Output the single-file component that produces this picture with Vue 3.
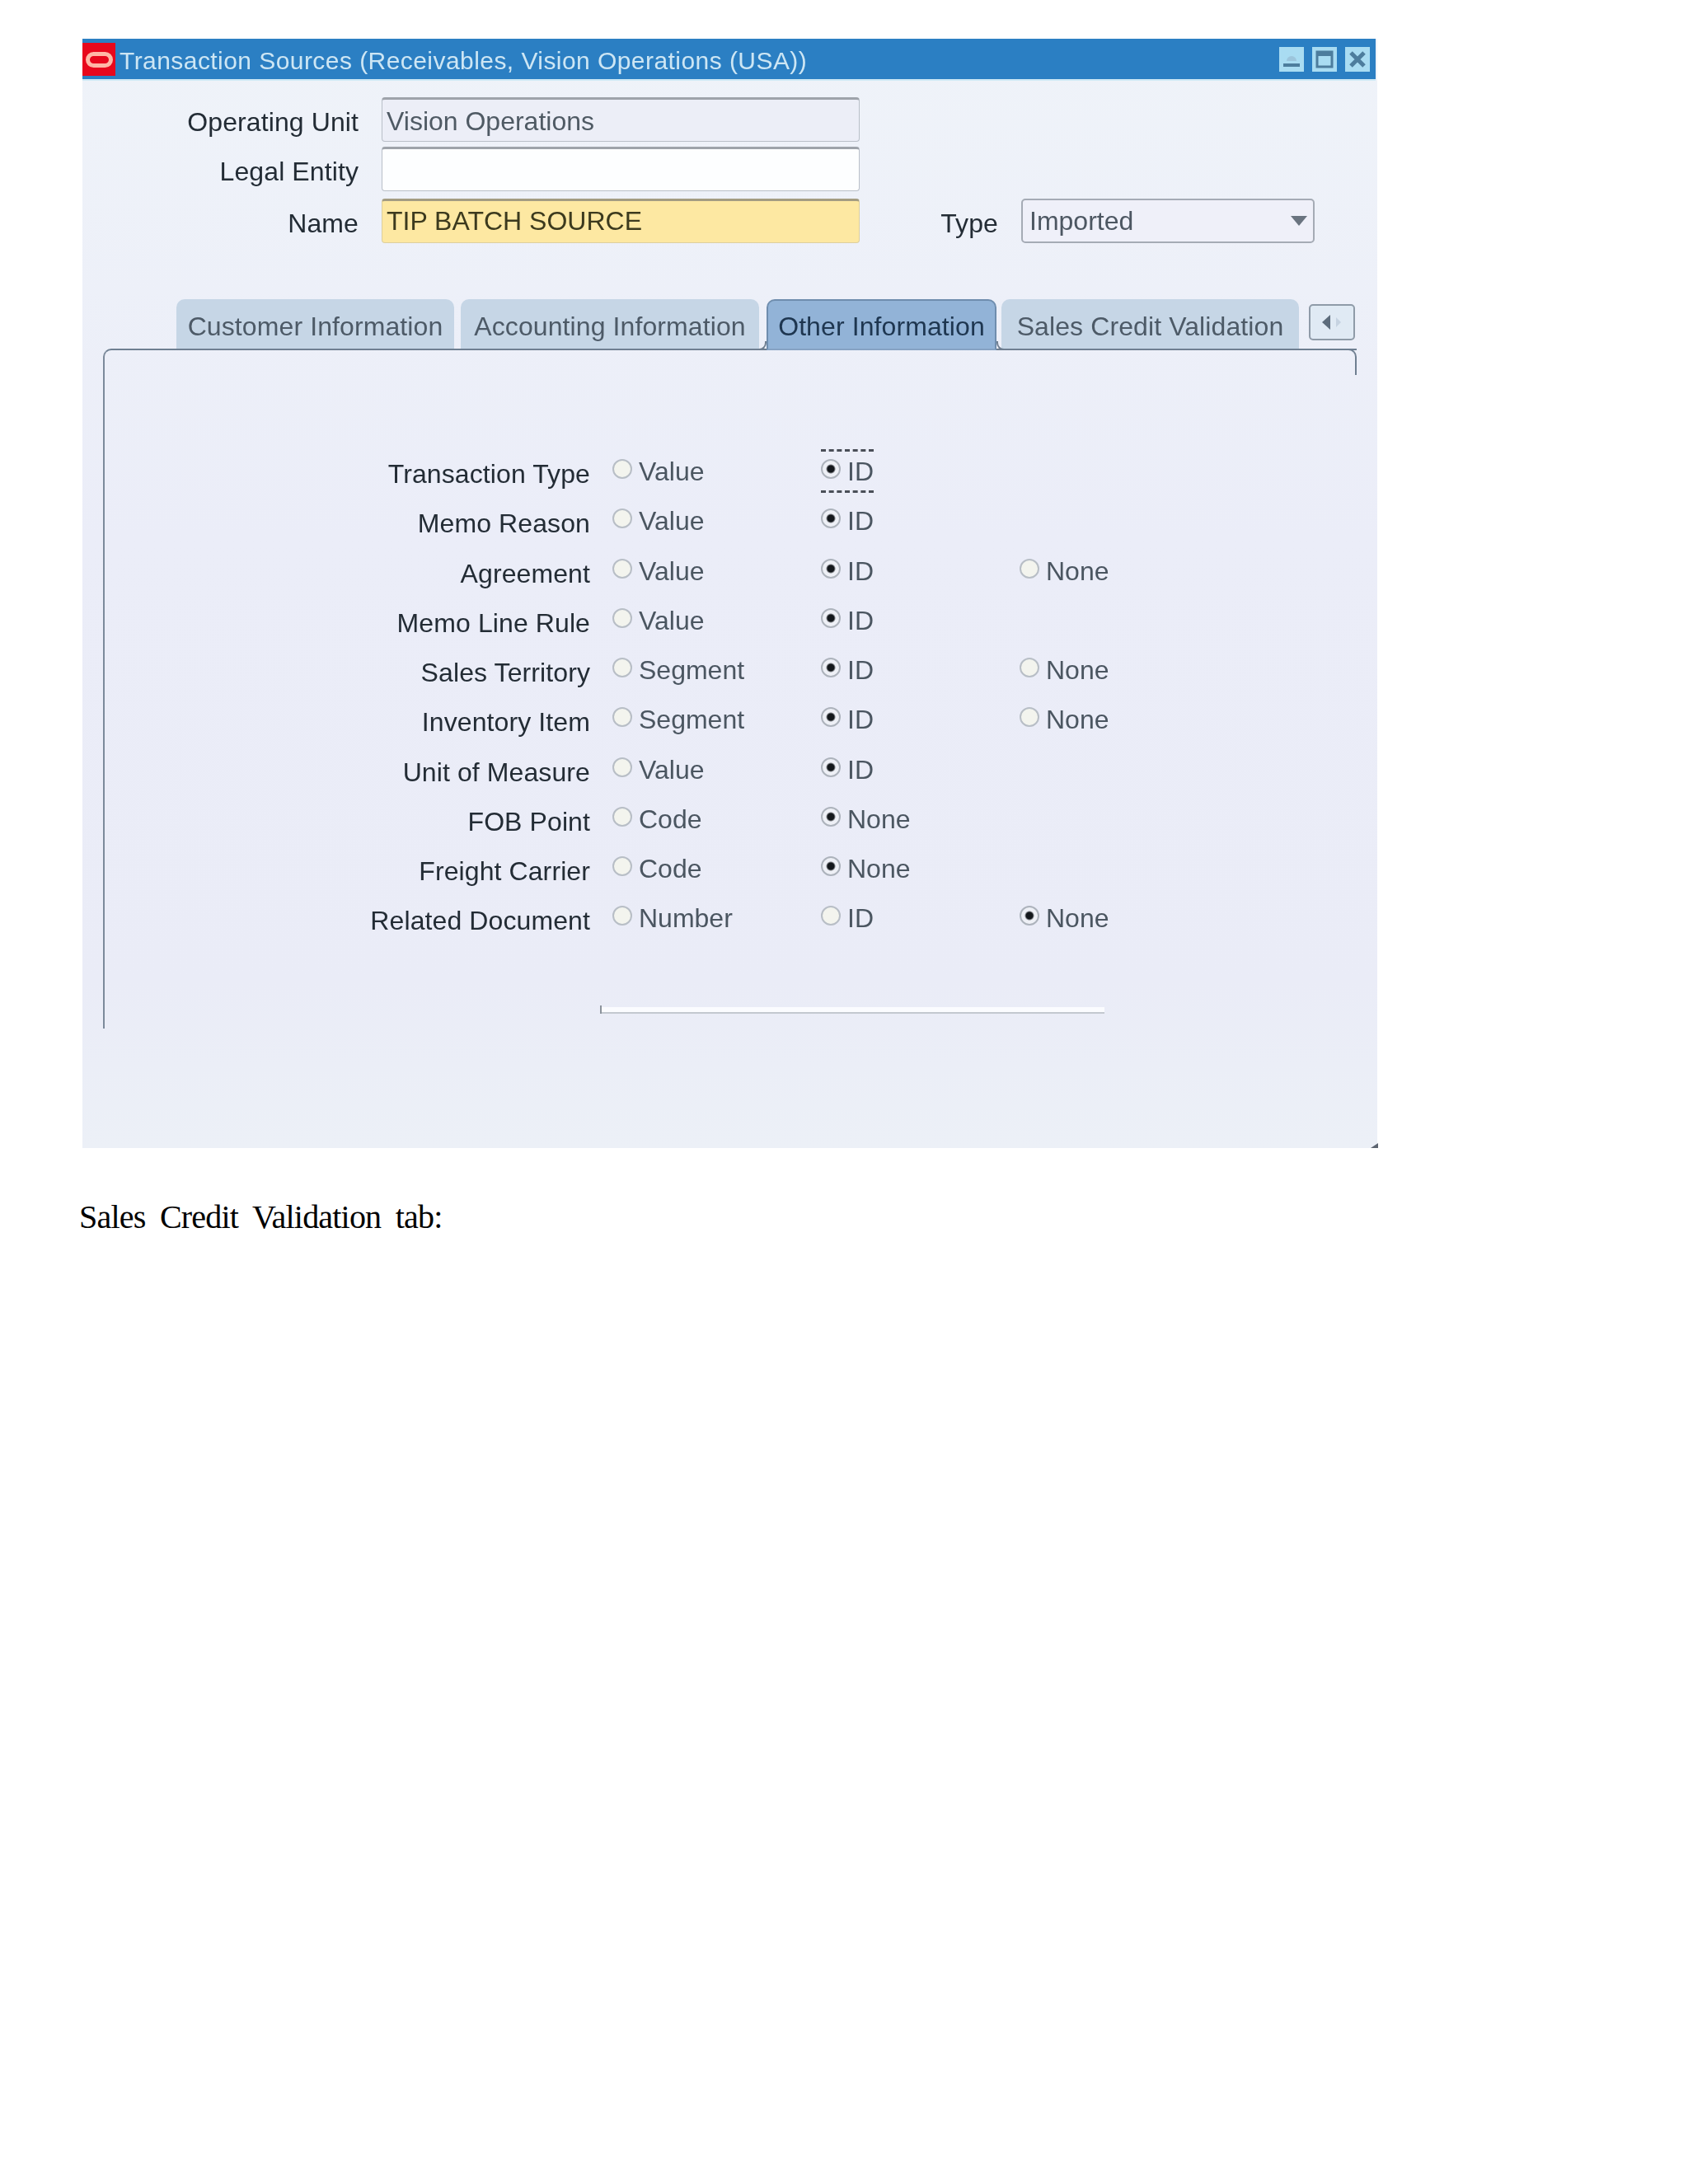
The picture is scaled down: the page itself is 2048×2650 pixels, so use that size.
<script setup>
const tabs = [
  { label: 'Customer Information', w: 337, gap: 8 },
  { label: 'Accounting Information', w: 362, gap: 9 },
  { label: 'Other Information', w: 279, gap: 6, active: true },
  { label: 'Sales Credit Validation', w: 361, gap: 0 }
]
const rows = [
  { label: 'Transaction Type', opts: ['Value', 'ID'], sel: 1, focus: true },
  { label: 'Memo Reason', opts: ['Value', 'ID'], sel: 1 },
  { label: 'Agreement', opts: ['Value', 'ID', 'None'], sel: 1 },
  { label: 'Memo Line Rule', opts: ['Value', 'ID'], sel: 1 },
  { label: 'Sales Territory', opts: ['Segment', 'ID', 'None'], sel: 1 },
  { label: 'Inventory Item', opts: ['Segment', 'ID', 'None'], sel: 1 },
  { label: 'Unit of Measure', opts: ['Value', 'ID'], sel: 1 },
  { label: 'FOB Point', opts: ['Code', 'None'], sel: 1 },
  { label: 'Freight Carrier', opts: ['Code', 'None'], sel: 1 },
  { label: 'Related Document', opts: ['Number', 'ID', 'None'], sel: 2 }
]
</script>

<template>
  <div class="page">
    <section class="window">
      <header class="titlebar">
        <span class="logo"><span class="ring"></span></span>
        <span class="title">Transaction Sources (Receivables, Vision Operations (USA))</span>
        <span class="controls">
          <span class="ctl">
            <svg viewBox="0 0 30 30" width="30" height="30"><path d="M9 17a6 6 0 0 1 12 0z" fill="#9cc5dc"/><rect x="5" y="20" width="20" height="4" fill="#4d7d9d"/></svg>
          </span>
          <span class="ctl">
            <svg viewBox="0 0 30 30" width="30" height="30"><rect x="6" y="6" width="18" height="18" fill="none" stroke="#4d7d9d" stroke-width="3"/><rect x="6" y="6" width="18" height="5" fill="#4d7d9d"/></svg>
          </span>
          <span class="ctl">
            <svg viewBox="0 0 30 30" width="30" height="30"><path d="M7 7 23 23M23 7 7 23" stroke="#4d7d9d" stroke-width="5"/></svg>
          </span>
        </span>
      </header>

      <div class="form">
        <div class="form-row">
          <label class="flabel">Operating Unit</label>
          <div class="input readonly">Vision Operations</div>
        </div>
        <div class="form-row">
          <label class="flabel">Legal Entity</label>
          <div class="input blank"></div>
        </div>
        <div class="form-row third">
          <label class="flabel">Name</label>
          <div class="input required">TIP BATCH SOURCE</div>
          <label class="flabel type-label">Type</label>
          <div class="select">
            <span>Imported</span>
            <svg viewBox="0 0 22 14" width="22" height="14"><path d="M1 1h20L11 13z" fill="#6a7480"/></svg>
          </div>
        </div>
      </div>

      <nav class="tabs">
        <div
          v-for="t in tabs"
          :key="t.label"
          class="tab"
          :class="{ active: t.active }"
          :style="{ width: t.w + 'px', marginRight: t.gap + 'px' }"
        >{{ t.label }}</div>
        <div class="scroll">
          <svg viewBox="0 0 30 22" width="30" height="22"><path d="M13 2v18L3 11z" fill="#5d6c7c"/><path d="M20 5v12l6-6z" fill="#c6d3e1"/></svg>
        </div>
      </nav>

      <div class="panel">
        <div v-for="r in rows" :key="r.label" class="row">
          <span class="rlabel">{{ r.label }}</span>
          <span
            v-for="(o, i) in r.opts"
            :key="o"
            class="opt"
            :class="{ focus: r.focus && i === r.sel }"
          >
            <span class="radio" :class="{ on: i === r.sel }"></span>
            <span class="otext">{{ o }}</span>
          </span>
        </div>
        <div class="rule"></div>
      </div>
      <i class="corner"></i>
    </section>

    <p class="caption">Sales Credit Validation tab:</p>
  </div>
</template>

<style scoped>
.page {
  width: 2048px;
  height: 2650px;
  padding-top: 47px;
  box-sizing: border-box;
  background: #fff;
  overflow: hidden;
}
.window {
  position: relative;
  margin-left: 100px;
  width: 1571px;
  height: 1346px;
  background: linear-gradient(#eff3f9 0, #ebedf8 45%, #eaecf7 85%, #ecf0f7 100%);
  font-family: "Liberation Sans", Arial, sans-serif;
  font-size: 32px;
  color: #232c35;
  filter: blur(0.5px);
}
.titlebar {
  display: flex;
  align-items: flex-start;
  width: 1569px;
  height: 51px;
  box-sizing: border-box;
  background: #2b7fc3;
  border-bottom: 2px solid #cfeaf6;
}
.logo {
  display: flex;
  align-items: center;
  justify-content: center;
  width: 40px;
  height: 40px;
  margin-top: 5px;
  background: #e8071c;
}
.ring {
  width: 33px;
  height: 19px;
  box-sizing: border-box;
  border: 5px solid #ffb7a6;
  border-radius: 10px;
}
.title {
  margin-left: 5px;
  font-size: 30px;
  letter-spacing: 0.44px;
  line-height: 53px;
  color: #cde6f4;
  white-space: nowrap;
}
.controls {
  display: flex;
  gap: 10px;
  margin-left: auto;
  margin-top: 10px;
  margin-right: 7px;
}
.ctl {
  display: block;
  width: 30px;
  height: 30px;
  background: #a9dcf2;
}
.ctl svg { display: block; }
.form {
  padding-top: 20px;
}
.form-row {
  display: flex;
  align-items: flex-start;
  height: 54px;
  margin-bottom: 6px;
}
.form-row.third {
  margin-top: 9px;
  margin-bottom: 0;
}
.flabel {
  width: 335px;
  margin-right: 28px;
  text-align: right;
  letter-spacing: 0.1px;
  line-height: 60px;
  white-space: nowrap;
}
.input {
  width: 580px;
  height: 54px;
  box-sizing: border-box;
  padding-left: 5px;
  line-height: 52px;
  border: 1px solid #b9bfc8;
  border-top: 3px solid #9ea3aa;
  border-radius: 4px;
  white-space: nowrap;
}
.readonly { background: #eceef7; color: #4f5a64; }
.blank { background: #fdfeff; }
.required { background: #fde8a2; color: #3c3a1e; border-color: #dccf9f; border-top-color: #a39c82; line-height: 49px; }
.flabel.type-label {
  width: 168px;
  margin-right: 28px;
}
.select {
  display: flex;
  align-items: center;
  justify-content: space-between;
  width: 356px;
  height: 54px;
  box-sizing: border-box;
  padding: 0 6px 0 8px;
  border: 2px solid #a5abb5;
  border-radius: 5px;
  background: #eff0f9;
  color: #4d5762;
}
.tabs {
  display: flex;
  align-items: flex-start;
  height: 60px;
  margin-top: 68px;
  margin-left: 114px;
}
.tab {
  height: 60px;
  box-sizing: border-box;
  padding-top: 14px;
  text-align: center;
  letter-spacing: 0.1px;
  line-height: 38px;
  background: #c6d6e6;
  color: #4d5a67;
  border-radius: 10px 10px 0 0;
  white-space: nowrap;
}
.tab.active {
  position: relative;
  z-index: 1;
  height: 62px;
  background: #92b3d7;
  color: #1e3650;
  border: 2px solid #6f8dae;
  border-bottom-color: #86a2c3;
  padding-top: 12px;
}
.tab.active::before,
.tab.active::after {
  content: "";
  position: absolute;
  bottom: -2px;
  width: 9px;
  height: 11px;
  box-sizing: border-box;
  border-bottom: 2px solid #6f7f91;
}
.tab.active::before {
  left: -11px;
  border-right: 2px solid #6f7f91;
  border-bottom-right-radius: 9px;
}
.tab.active::after {
  right: -11px;
  border-left: 2px solid #6f7f91;
  border-bottom-left-radius: 9px;
}
.scroll {
  display: flex;
  align-items: center;
  justify-content: center;
  width: 56px;
  height: 44px;
  box-sizing: border-box;
  margin-top: 6px;
  margin-left: 12px;
  background: #e0eaf4;
  border: 2px solid #8f9ba8;
  border-radius: 5px;
}
.panel {
  position: relative;
  margin-left: 25px;
  width: 1521px;
  height: 825px;
  box-sizing: border-box;
  padding-top: 118px;
  border-top: 2px solid #6f7f91;
  border-left: 2px solid #7c8a9b;
  border-top-left-radius: 10px;
}
.panel::after {
  content: "";
  position: absolute;
  right: 0;
  top: -2px;
  width: 12px;
  height: 30px;
  border-top: 2px solid #6f7f91;
  border-right: 2px solid #6f7f91;
  border-top-right-radius: 10px;
}
.row {
  display: flex;
  height: 60.25px;
  align-items: flex-start;
}
.rlabel {
  width: 589px;
  margin-right: 27px;
  text-align: right;
  letter-spacing: 0.1px;
  line-height: 64px;
  white-space: nowrap;
}
.opt {
  position: relative;
  display: flex;
  align-items: flex-start;
  width: 241px;
  color: #4b5661;
  line-height: 59px;
}
.opt:nth-child(2) { width: 253px; }
.radio {
  width: 24px;
  height: 24px;
  margin: 14px 8px 0 0;
  box-sizing: border-box;
  border-radius: 50%;
  border: 2px solid #b8bec6;
  background: #f3f4ee;
  flex: none;
}
.radio.on {
  border-color: #adb3bc;
  background: radial-gradient(circle, #14181c 0 4px, #eef0f6 6px);
}
.otext { white-space: nowrap; }
.opt.focus::before,
.opt.focus::after {
  content: "";
  position: absolute;
  left: 0;
  width: 64px;
  border-top: 3px dashed #4a4f58;
}
.opt.focus::before { top: 2px; }
.opt.focus::after { top: 52px; }
.rule {
  position: relative;
  width: 612px;
  height: 6px;
  margin-top: 76px;
  margin-left: 601px;
  background: #fbfcff;
  border-bottom: 2px solid #c3c8d0;
}
.rule::before {
  content: "";
  position: absolute;
  left: 0;
  top: -2px;
  height: 10px;
  border-left: 2px solid #8c939c;
}
.corner {
  position: absolute;
  right: -1px;
  bottom: 0;
  width: 9px;
  height: 6px;
  background: #5c6470;
  clip-path: polygon(100% 0, 100% 100%, 0 100%);
}
.caption {
  margin: 61px 0 0 96px;
  font-family: "Liberation Serif", "Times New Roman", serif;
  font-size: 40px;
  letter-spacing: -0.8px;
  word-spacing: 8.3px;
  line-height: 46px;
  color: #000;
  white-space: nowrap;
}
</style>
